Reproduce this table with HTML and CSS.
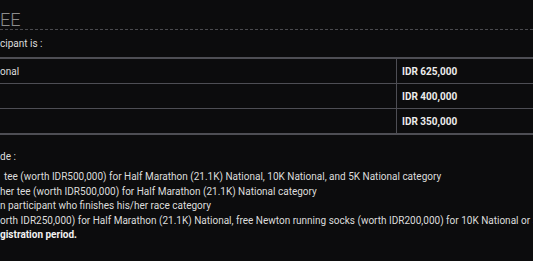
FILE: index.html
```html
<!DOCTYPE html>
<html>
<head>
<meta charset="utf-8">
<link rel="stylesheet" href="styles.css">
</head>
<body>
<div class="page">
  <h2 class="title">EE</h2>
  <p class="intro">cipant is :</p>
  <table class="prices">
    <tr><td class="cat">onal</td><td class="price">IDR 625,000</td></tr>
    <tr><td class="cat"></td><td class="price">IDR 400,000</td></tr>
    <tr><td class="cat"></td><td class="price">IDR 350,000</td></tr>
  </table>
  <p class="pack">de :</p>
  <ul class="items">
    <li class="first">tee (worth IDR500,000) for Half Marathon (21.1K) National, 10K National, and 5K National category</li>
    <li>her tee (worth IDR500,000) for Half Marathon (21.1K) National category</li>
    <li>n participant who finishes his/her race category</li>
    <li>orth IDR250,000) for Half Marathon (21.1K) National, free Newton running socks (worth IDR200,000) for 10K National or 5K National category</li>
    <li><b>gistration period.</b></li>
  </ul>
</div>
</body>
</html>
```
FILE: styles.css
```css
html, body {
  margin: 0;
  padding: 0;
  background: #0c0c0d;
  overflow: hidden;
}
.page {
  width: 533px;
  font-family: Roboto, "Liberation Sans", sans-serif;
  font-size: 10px;
  color: #dcdcdc;
}
.title {
  margin: 0;
  height: 30px;
  box-sizing: border-box;
  padding-top: 11px;
  font-size: 18px;
  line-height: 18px;
  font-weight: 300;
  color: #8c8c8c;
  border-bottom: 1px dashed #4a4a4e;
  white-space: nowrap;
}
.intro {
  margin: 0;
  height: 27px;
  line-height: 28px;
  white-space: nowrap;
}
.prices {
  width: 640px;
  border-collapse: collapse;
  border-top: 2px solid #4e4e54;
  border-bottom: 2px solid #4e4e54;
}
.prices td {
  height: 24px;
  padding: 0;
  vertical-align: middle;
  white-space: nowrap;
}
.prices tr + tr td {
  border-top: 1px solid #4e4e54;
}
.prices .cat {
  width: 396px;
  border-right: 1px solid #4e4e54;
}
.prices .price {
  padding-left: 5px;
  font-weight: 700;
  color: #ececec;
}
.pack {
  margin: 0;
  padding-top: 15px;
  line-height: 14px;
  white-space: nowrap;
}
.items {
  list-style: none;
  margin: 6px 0 0 0;
  padding: 0;
  line-height: 14.5px;
  white-space: nowrap;
}
.items .first {
  padding-left: 4px;
}
.items b {
  color: #f2f2f2;
}
```
